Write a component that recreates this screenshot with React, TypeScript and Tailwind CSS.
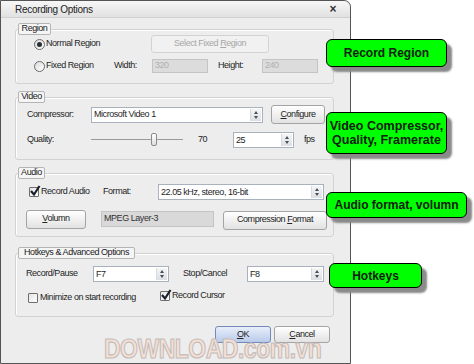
import React from 'react';

const font = { fontFamily: '"Liberation Sans", Arial, sans-serif' };

function Spinner() {
  return (
    <div className="flex h-full w-[11px] flex-col items-center justify-center gap-[2px] border-l border-[#d6d9de] bg-gradient-to-b from-[#f4f5f7] to-[#dcdfe4]">
      <div className="h-0 w-0 border-x-[2.5px] border-b-[3px] border-x-transparent border-b-[#4a4f58]" />
      <div className="h-0 w-0 border-x-[2.5px] border-t-[3px] border-x-transparent border-t-[#4a4f58]" />
    </div>
  );
}

function Select({ value, className }: { value: string; className: string }) {
  return (
    <div className={`flex items-stretch border border-[#a9b1bc] bg-white ${className}`}>
      <span className="flex-1 truncate pl-[2px] leading-none self-center">{value}</span>
      <div className="p-[1px]">
        <Spinner />
      </div>
    </div>
  );
}

function Button({ children, className, disabled }: { children: React.ReactNode; className: string; disabled?: boolean }) {
  return (
    <div
      className={`flex items-center justify-center rounded-[3px] border ${
        disabled
          ? 'border-[#d3d3d3] bg-[#f1f1f1] text-[#a7a7a7]'
          : 'border-[#a4a4a4] bg-gradient-to-b from-[#ffffff] to-[#e2e2e2] text-[#222]'
      } ${className}`}
    >
      {children}
    </div>
  );
}

function Group({ label, labelW, className, children }: { label: string; labelW: string; className: string; children: React.ReactNode }) {
  return (
    <div className={`relative rounded-[3px] border border-[#d2d2d2] shadow-[inset_1px_1px_0_#fff] ${className}`}>
      <div className={`absolute left-[2px] top-[-7px] flex h-[12px] items-center justify-center rounded-[2px] border border-[#b5b5b5] bg-[#f5f5f5] text-[#222] ${labelW}`}>
        {label}
      </div>
      {children}
    </div>
  );
}

function Check({ checked }: { checked?: boolean }) {
  return (
    <div className="relative h-[10px] w-[10px] rounded-[1px] border border-[#6e6e6e] bg-gradient-to-br from-[#e4e4e4] to-[#fff]">
      {checked && (
        <svg className="absolute left-[-1px] top-[-3px]" width="12" height="12" viewBox="0 0 12 12">
          <path d="M2 6 L5 9.5 L10.5 1" fill="none" stroke="#1a1f2c" strokeWidth="2.2" />
        </svg>
      )}
    </div>
  );
}

function Radio({ on }: { on?: boolean }) {
  return (
    <div className="flex h-[11px] w-[11px] items-center justify-center rounded-full border border-[#6b6b6b] bg-gradient-to-br from-[#dcdcdc] to-[#fff]">
      {on && <div className="h-[5px] w-[5px] rounded-full bg-[#2a2e36]" />}
    </div>
  );
}

function Callout({ className, children }: { className: string; children: React.ReactNode }) {
  return (
    <div
      className={`absolute flex items-center justify-center rounded-[6px] border border-black bg-[#00ff00] text-center font-bold text-[#102010] shadow-[5px_5px_2px_#8a8a8a] ${className}`}
      style={font}
    >
      {children}
    </div>
  );
}

export default function App() {
  return (
    <div className="relative h-[364px] w-[474px] overflow-hidden bg-white text-[9px] tracking-[-0.45px] text-[#1e1e1e]" style={font}>
      {/* Dialog */}
      <div className="flex h-[364px] w-[351px] flex-col rounded-tr-[7px] border border-[#555] bg-[#ededed]">
        <div className="flex h-[17px] items-center justify-between rounded-tr-[7px] border-b border-[#d0d0d0] bg-gradient-to-b from-[#f7f7f7] to-[#e1e1e1] pl-[14px] pr-[14px]">
          <span className="text-[10px] tracking-[-0.3px] text-[#222]">Recording Options</span>
          <span className="text-[12px] font-bold leading-none text-[#333]">×</span>
        </div>

        <div className="flex flex-col px-[14px] pt-[11px]">
          <Group label="Region" labelW="w-[33px]" className="h-[55px] w-[319px] pl-[18px] pt-[5px]">
            <div className="flex h-[18px] items-center">
              <div className="flex w-[117px] items-center gap-[1px]">
                <Radio on />
                <span>Normal Region</span>
              </div>
              <Button disabled className="h-[18px] w-[118px]">
                <span>
                  Select Fixed <span className="underline">R</span>egion
                </span>
              </Button>
            </div>
            <div className="mt-[6px] flex h-[14px] items-center">
              <div className="flex w-[80px] items-center gap-[1px]">
                <Radio />
                <span>Fixed Region</span>
              </div>
              <span className="w-[38px]">Width:</span>
              <div className="flex h-[14px] w-[56px] items-center border border-[#c4c4c4] bg-[#dcdcdc] pl-[2px] text-[#b0b0b0]">320</div>
              <span className="ml-[10px] w-[44px]">Height:</span>
              <div className="flex h-[14px] w-[56px] items-center border border-[#c4c4c4] bg-[#dcdcdc] pl-[2px] text-[#b0b0b0]">240</div>
            </div>
          </Group>

          <Group label="Video" labelW="w-[27px]" className="mt-[13px] h-[63px] w-[319px] pl-[11px] pt-[7px]">
            <div className="flex h-[19px] items-center">
              <span className="w-[64px]">Compressor:</span>
              <Select value="Microsoft Video 1" className="h-[16px] w-[172px]" />
              <Button className="ml-[8px] h-[19px] w-[54px]">
                <span>
                  <span className="underline">C</span>onfigure
                </span>
              </Button>
            </div>
            <div className="mt-[8px] flex h-[16px] items-center">
              <span className="w-[64px]">Quality:</span>
              <div className="relative h-[14px] w-[92px]">
                <div className="absolute left-0 right-0 top-[6px] h-[2px] border-t border-[#9a9a9a] border-b-white" />
                <div className="absolute left-[60px] top-0 h-[13px] w-[6px] rounded-[2px] border border-[#8c8c8c] bg-gradient-to-b from-white to-[#dedede]" />
              </div>
              <span className="ml-[15px] w-[35px]">70</span>
              <Select value="25" className="h-[16px] w-[61px]" />
              <span className="ml-[10px]">fps</span>
            </div>
          </Group>

          <Group label="Audio" labelW="w-[27px]" className="mt-[13px] h-[64px] w-[319px] pl-[13px] pt-[10px]">
            <div className="flex h-[16px] items-center">
              <div className="flex w-[74px] items-center gap-[2px]">
                <Check checked />
                <span>Record Audio</span>
              </div>
              <span className="w-[55px]">Format:</span>
              <Select value="22.05 kHz, stereo, 16-bit" className="h-[16px] w-[166px]" />
            </div>
            <div className="ml-[-3px] mt-[9px] flex h-[20px] items-center">
              <Button className="h-[19px] w-[60px]">
                <span>
                  <span className="underline">V</span>olumn
                </span>
              </Button>
              <div className="ml-[15px] flex h-[16px] w-[113px] items-center border border-[#c4c4c4] bg-[#d9d9d9] pl-[2px] text-[#333]">MPEG Layer-3</div>
              <Button className="ml-[9px] mt-[2px] h-[19px] w-[104px]">
                <span>
                  Compression <span className="underline">F</span>ormat
                </span>
              </Button>
            </div>
          </Group>

          <Group label="Hotkeys & Advanced Options" labelW="w-[117px]" className="mt-[16px] h-[64px] w-[319px] pl-[10px] pt-[12px]">
            <div className="flex h-[16px] items-center">
              <span className="w-[67px]">Record/Pause</span>
              <Select value="F7" className="h-[16px] w-[76px]" />
              <span className="ml-[14px] w-[64px]">Stop/Cancel</span>
              <Select value="F8" className="h-[16px] w-[77px]" />
            </div>
            <div className="mt-[7px] flex h-[13px] items-center">
              <div className="flex w-[134px] items-center gap-[2px] pl-[2px] pt-[4px]">
                <Check />
                <span>Minimize on start recording</span>
              </div>
              <div className="flex items-center gap-[2px]">
                <Check checked />
                <span>Record Cursor</span>
              </div>
            </div>
          </Group>

          <div className="mt-[9px] flex justify-end gap-[3px] pr-[6px]">
            <div className="flex h-[17px] w-[56px] items-center justify-center rounded-[3px] border border-[#7289b9] bg-gradient-to-b from-[#e8eefa] to-[#b9cbea] text-[#222]">
              <span className="underline">O</span>K
            </div>
            <Button className="h-[17px] w-[56px]">
              <span>
                <span className="underline">C</span>ancel
              </span>
            </Button>
          </div>
        </div>
      </div>

      {/* Watermark */}
      <div className="absolute left-[104px] top-[340px] origin-bottom scale-y-[1.2] text-[23px] font-bold leading-[20px] tracking-[-0.5px] text-[#f6e0d4] [-webkit-text-stroke:1px_#c4bcba]">
        DOWNLOAD.com.vn
      </div>

      {/* Callouts */}
      <Callout className="left-[326px] top-[39px] h-[28px] w-[121px] text-[12px] leading-[14px] tracking-[0px]">Record Region</Callout>
      <Callout className="left-[326px] top-[112px] h-[42px] w-[121px] text-[12.5px] leading-[14px] tracking-[0px]">
        Video Compressor,
        <br />
        Quality, Framerate
      </Callout>
      <Callout className="left-[326px] top-[192px] h-[26px] w-[141px] text-[12px] leading-[14px] tracking-[0px]">Audio format, volumn</Callout>
      <Callout className="left-[329px] top-[263px] h-[25px] w-[93px] text-[12px] leading-[14px] tracking-[0px]">Hotkeys</Callout>
    </div>
  );
}
